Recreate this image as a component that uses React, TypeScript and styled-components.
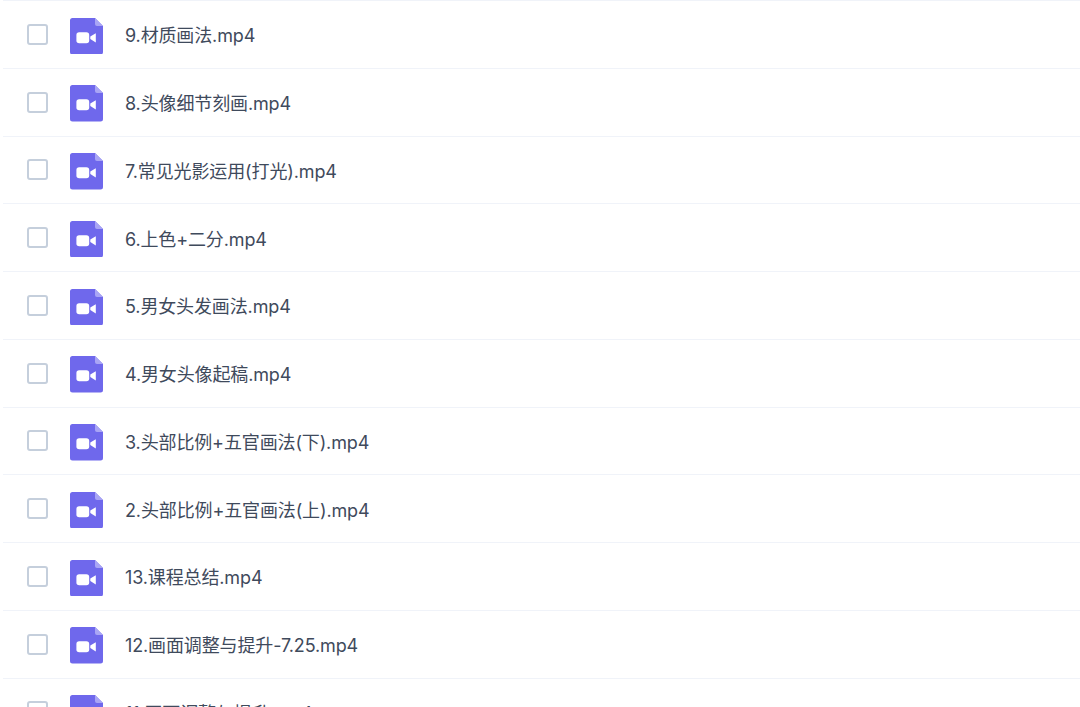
import React from 'react';
import styled, {createGlobalStyle} from 'styled-components';

const files = [
    '9.材质画法.mp4',
    '8.头像细节刻画.mp4',
    '7.常见光影运用(打光).mp4',
    '6.上色+二分.mp4',
    '5.男女头发画法.mp4',
    '4.男女头像起稿.mp4',
    '3.头部比例+五官画法(下).mp4',
    '2.头部比例+五官画法(上).mp4',
    '13.课程总结.mp4',
    '12.画面调整与提升-7.25.mp4',
    '11.画面调整与提升.mp4',
];

const VideoFileIcon = () => (
    <svg width="33" height="36.5" viewBox="0 0 33 36.5">
        <path d="M2.5 0H25L33 8V34a2.5 2.5 0 0 1-2.5 2.5H2.500a2.500 2.500 0 0 1-2.500-2.500V2.500a2.500 2.500 0 0 1 2.500-2.500Z" fill="#6f68ec"/>
        <path d="M25 0L33 8H27a2 2 0 0 1-2-2Z" fill="#a9a5f5"/>
        <rect x="6.400" y="14.300" width="12.800" height="11" rx="2.800" fill="#fff"/>
        <path d="M20.300 18.500L25.800 15.200V24.400L20.300 21.100Z" fill="#fff"/>
    </svg>
);

export default function App() {
    return (
        <>
            <GlobalStyle/>
            <FileList>
                {files.map(name => (
                    <FileRow key={name}>
                        <Checkbox/>
                        <IconWrapper><VideoFileIcon/></IconWrapper>
                        <FileName>{name}</FileName>
                    </FileRow>
                ))}
            </FileList>
        </>
    );
}

const GlobalStyle = createGlobalStyle`
  html, body {
    margin: 0;
    height: 707px;
    overflow: hidden;
    background: #fff;
  }
`

const FileList = styled.div`
  display: flex;
  flex-direction: column;
  padding-left: 3px;
  font-family: Inter, "Noto Sans CJK SC", sans-serif;
`

const FileRow = styled.div`
  display: flex;
  align-items: center;
  flex: none;
  height: 67.75px;
  box-sizing: border-box;
  padding-left: 24px;
  border-top: 1px solid #f0f3f9;
`

const Checkbox = styled.span`
  width: 21px;
  height: 21px;
  box-sizing: border-box;
  border: 2px solid #c5cfdc;
  border-radius: 3px;
  background: #fff;
`

const IconWrapper = styled.span`
  display: flex;
  margin: 3px 0 0 22px;
`

const FileName = styled.span`
  margin-left: 22px;
  font-size: 18px;
  letter-spacing: -0.13px;
  color: #3f4a5c;
  white-space: nowrap;
`
